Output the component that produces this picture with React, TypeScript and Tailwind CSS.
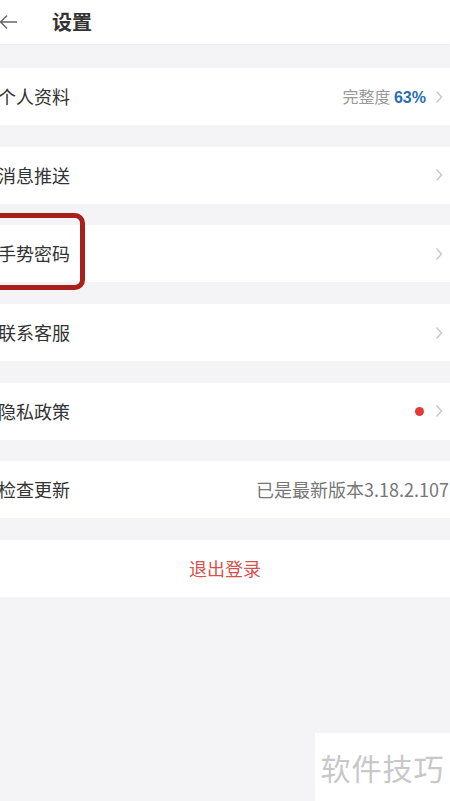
const font = { fontFamily: '"Noto Sans CJK SC", "Noto Sans", sans-serif' };

const Chevron = () => (
  <svg width="8" height="14" viewBox="0 0 8 14" className="shrink-0">
    <path d="M1.5 1.5 L6.5 7 L1.5 12.5" fill="none" stroke="#c8c8cc" strokeWidth="1.4" />
  </svg>
);

type RowProps = {
  label: string;
  right?: React.ReactNode;
  chevron?: boolean;
  marked?: boolean;
};

const Row = ({ label, right, chevron = true, marked }: RowProps) => (
  <div className="relative h-[57px] bg-white flex items-center justify-between pr-[7px]">
    <p className="-ml-[2px] text-[18px] text-[#333]">{label}</p>
    <div className="flex items-center gap-[9px]">
      {right}
      {chevron && <Chevron />}
    </div>
    {/* highlight box */}
    {marked && (
      <div className="absolute -left-[12px] -top-[12px] w-[97px] h-[77px] rounded-[10px] border-[5px] border-[#a8201a]" />
    )}
  </div>
);

export default function App() {
  return (
    <div style={font} className="relative w-[450px] h-[801px] overflow-hidden bg-[#f4f4f6]">
      {/* header */}
      <div className="h-[44px] bg-white flex items-center gap-[34px] shadow-[0_1px_2px_rgba(0,0,0,0.04)]">
        <svg width="20" height="16" viewBox="0 0 20 16" className="-ml-[2px]">
          <path d="M9 1.5 L2.5 8 L9 14.5 M2.5 8 H19" fill="none" stroke="#666" strokeWidth="1.5" />
        </svg>
        <p className="text-[20px] font-bold text-[#333]">设置</p>
      </div>

      <div className="flex flex-col gap-[21.7px] pt-[24px]">
        <Row
          label="个人资料"
          right={
            <p className="text-[16px] text-[#999]">
              完整度 <span className="font-bold text-[#2a6db3]" style={{ fontFamily: '"Liberation Sans", sans-serif' }}>63%</span>
            </p>
          }
        />
        <Row label="消息推送" />
        <Row label="手势密码" marked />
        <Row label="联系客服" />
        <Row
          label="隐私政策"
          right={<span className="w-[9px] h-[9px] rounded-full bg-[#e53935] mr-[2px]" />}
        />
        <Row
          label="检查更新"
          chevron={false}
          right={<p className="text-[18px] text-[#777] -mr-[6px] whitespace-nowrap">已是最新版本3.18.2.107</p>}
        />
        <div className="h-[57px] bg-white flex items-center justify-center">
          <p className="text-[18px] text-[#d6524c]">退出登录</p>
        </div>
      </div>

      {/* watermark */}
      <div className="absolute right-0 bottom-0 w-[135px] h-[68px] bg-white flex items-center justify-center">
        <p className="text-[30px] text-[#c8c8c8] tracking-[1px]">软件技巧</p>
      </div>
    </div>
  );
}
